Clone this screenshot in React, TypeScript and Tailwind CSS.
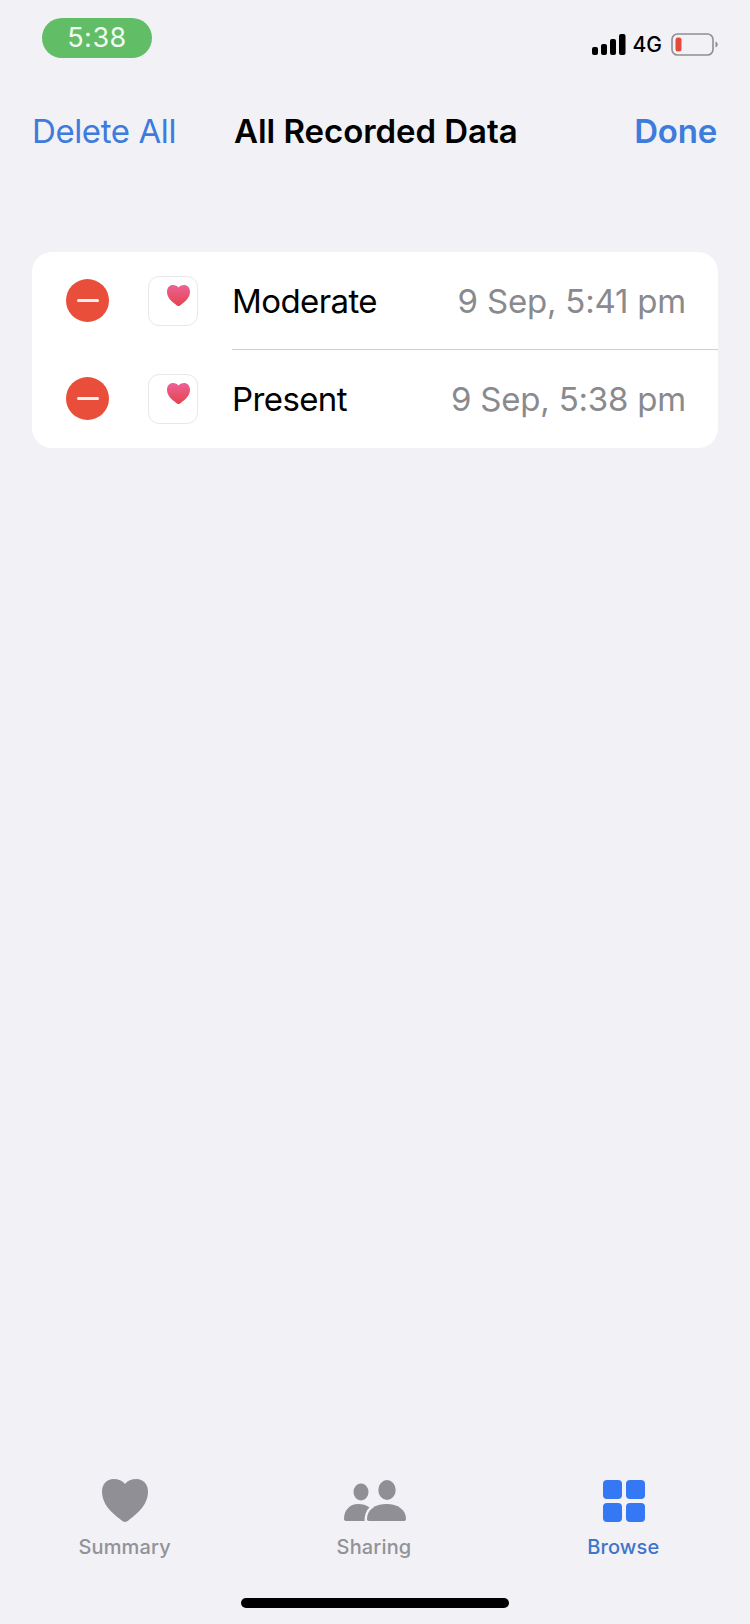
import { useId } from "react";

const RECORDS = [
  { label: "Moderate", date: "9 Sep, 5:41 pm" },
  { label: "Present", date: "9 Sep, 5:38 pm" },
];

function SignalBars() {
  return (
    <svg width="34" height="21" viewBox="0 0 34 21" aria-hidden>
      <rect x="0" y="13" width="6" height="8" rx="2" fill="#000" />
      <rect x="9" y="10" width="6" height="11" rx="2" fill="#000" />
      <rect x="18" y="5" width="6" height="16" rx="2" fill="#000" />
      <rect x="27" y="0" width="6.5" height="21" rx="2" fill="#000" />
    </svg>
  );
}

function Battery() {
  return (
    <svg width="47" height="23" viewBox="0 0 47 23" aria-hidden>
      <rect x="1" y="1" width="41" height="21" rx="5.5" fill="none" stroke="#8f8f92" strokeWidth="1.6" />
      <rect x="4.5" y="4.5" width="6" height="14" rx="2.5" fill="#e5493a" />
      <path d="M44.5 8.5c1.4.5 2.200 1.600 2.200 3s-.8 2.500-2.200 3z" fill="#8f8f92" />
    </svg>
  );
}

function SmallHeart() {
  const id = useId();
  return (
    <svg width="23" height="21" viewBox="0 0 23 21" aria-hidden>
      <defs>
        <linearGradient id={id} x1="0" y1="0" x2="0" y2="1">
          <stop offset="0" stopColor="#ec6299" />
          <stop offset="1" stopColor="#e6434a" />
        </linearGradient>
      </defs>
      <path
        d="M11.500 21C10.800 21 10 20.400 9.300 19.900 4.500 16.500 0 12.500 0 6.500 0 2.700 2.700 0 6 0c2.400 0 4.400 1 5.500 2.600C12.600 1 14.600 0 17 0c3.300 0 6 2.700 6 6.500 0 6-4.500 10-9.300 13.400C13 20.400 12.200 21 11.500 21z"
        fill={`url(#${id})`}
      />
    </svg>
  );
}

function RecordRow({ label, date, last }: { label: string; date: string; last: boolean }) {
  return (
    <div className="flex h-[98px] items-center pl-[34px]">
      <div className="mb-[2px] flex h-[43px] w-[43px] shrink-0 items-center justify-center rounded-full bg-[#e94e3a]">
        <span className="h-[3px] w-[22px] rounded-full bg-[#fdf1ef]" />
      </div>
      <div className="ml-[39px] flex h-[50px] w-[50px] shrink-0 justify-end rounded-[11px] border border-[#e8e8ec] bg-white pr-[7px] pt-[8px]">
        <SmallHeart />
      </div>
      <div
        className={`ml-[34px] flex h-full min-w-0 flex-1 items-center justify-between pr-[32px] pt-[2px] ${
          last ? "" : "border-b border-[#cfcfd2]"
        }`}
      >
        <span className="text-[33px] tracking-[-0.6px] text-black">{label}</span>
        <span className="text-[33px] tracking-[-0.2px] text-[#8a8a8e]">{date}</span>
      </div>
    </div>
  );
}

function TabItem({ label, active, children }: { label: string; active?: boolean; children: React.ReactNode }) {
  return (
    <div className="flex w-[250px] flex-col items-center">
      <div className="flex h-[43px] items-center justify-center">{children}</div>
      <span
        className={`mt-[12px] text-[20px] font-medium leading-[26px] tracking-[0.15px] ${
          active ? "text-[#3f76cb]" : "text-[#929297]"
        }`}
      >
        {label}
      </span>
    </div>
  );
}

export default function App() {
  return (
    <div className="flex h-[1624px] w-[750px] flex-col overflow-hidden bg-[#f1f1f6] font-['Inter','Liberation_Sans',sans-serif]">
      {/* Status bar */}
      <div className="flex items-start justify-between pl-[42px] pr-[32px] pt-[18px]">
        <div className="flex h-[40px] w-[110px] items-center justify-center rounded-full bg-[#62bd67] text-[27px] tracking-[0.5px] text-[#f2fbf2]">
          5:38
        </div>
        <div className="mt-[15px] flex items-center">
          <SignalBars />
          <span className="ml-[7px] text-[21px] font-medium leading-[23px] text-black">4G</span>
          <span className="ml-[9px]">
            <Battery />
          </span>
        </div>
      </div>

      {/* Nav bar */}
      <div className="mt-[49px] flex items-center pl-[32px] pr-[33px]">
        <span className="text-[33px] leading-[48px] tracking-[-0.4px] text-[#3d7bdc]">Delete All</span>
        <span className="ml-[58px] text-[33px] font-semibold leading-[48px] tracking-[-0.05px] text-black">
          All Recorded Data
        </span>
        <span className="ml-auto text-[33px] font-semibold leading-[48px] tracking-[-0.2px] text-[#3d7bdc]">Done</span>
      </div>

      {/* Records */}
      <div className="mx-[32px] mt-[97px] overflow-hidden rounded-[20px] bg-white">
        {RECORDS.map((r, i) => (
          <RecordRow key={r.label} label={r.label} date={r.date} last={i === RECORDS.length - 1} />
        ))}
      </div>

      <div className="flex-1" />

      {/* Tab bar */}
      <div className="flex justify-center pr-[2px]">
        <TabItem label="Summary">
          <svg width="46" height="43" viewBox="0 0 46 43" aria-hidden>
            <path
              d="M23 43C21.500 43 20 41.800 18.500 40.600 9 33 0 25 0 12.500 0 5 5 0 11.500 0 16.500 0 20.500 1.800 23 5 25.500 1.800 29.500 0 34.500 0 41 0 46 5 46 12.500 46 25 37 33 27.500 40.600 26 41.800 24.500 43 23 43z"
              fill="#8f8f95"
            />
          </svg>
        </TabItem>
        <TabItem label="Sharing">
          <svg className="ml-[2px]" width="62" height="43" viewBox="0 0 62 43" aria-hidden>
            <ellipse cx="17" cy="13" rx="7.500" ry="8.500" fill="#8f8f95" />
            <ellipse cx="43" cy="11" rx="8.700" ry="10" fill="#8f8f95" />
            <path d="M0 40c0-9 6-15 14-15 4.500 0 8.500 1 11.500 3.500C22 31.500 20.500 36 20.500 42H2c-1.200 0-2-.8-2-2z" fill="#8f8f95" />
            <path d="M23 40c0-9 8-15 19.500-15S62 31 62 40c0 1.200-.8 2-2 2H25c-1.200 0-2-.8-2-2z" fill="#8f8f95" />
          </svg>
        </TabItem>
        <TabItem label="Browse" active>
          <div className="ml-[2px] grid grid-cols-2 gap-[4px]">
            <span className="h-[19px] w-[19px] rounded-[4px] bg-[#3478f6]" />
            <span className="h-[19px] w-[19px] rounded-[4px] bg-[#3478f6]" />
            <span className="h-[19px] w-[19px] rounded-[4px] bg-[#3478f6]" />
            <span className="h-[19px] w-[19px] rounded-[4px] bg-[#3478f6]" />
          </div>
        </TabItem>
      </div>

      {/* Home indicator */}
      <div className="mb-[16px] mt-[38px] flex justify-center">
        <span className="h-[10px] w-[268px] rounded-full bg-black" />
      </div>
    </div>
  );
}
